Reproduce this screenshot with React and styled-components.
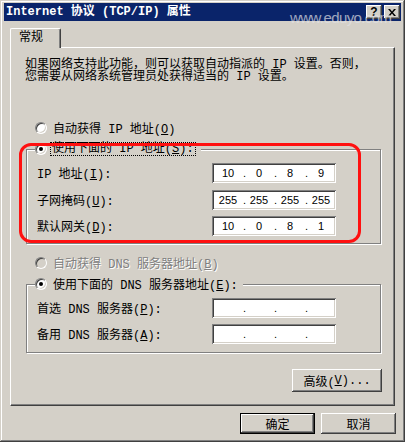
import React from "react";
import styled, { createGlobalStyle } from "styled-components";

const FACE = "#d4d0c8";

const GlobalStyle = createGlobalStyle`
  html, body {
    margin: 0;
    padding: 0;
    background: ${FACE};
  }
  body {
    font-family: "Liberation Mono", "Noto Sans CJK SC", monospace;
    font-size: 12px;
    color: #000;
  }
  * { box-sizing: border-box; }
`;

const Window = styled.div`
  position: relative;
  width: 405px;
  height: 442px;
  padding: 3px 4px 0 4px;
  background: ${FACE};
  box-shadow: inset -1px -1px #404040, inset 1px 1px ${FACE},
    inset -2px -2px #808080, inset 2px 2px #fff;
  display: flex;
  flex-direction: column;
  overflow: hidden;
`;

const TitleBar = styled.div`
  height: 18px;
  background: #0a246a;
  display: flex;
  align-items: center;
  padding: 0 1px 0 2px;
`;

const TitleText = styled.span`
  flex: 1;
  color: #fff;
  font-weight: bold;
  line-height: 18px;
  white-space: nowrap;
`;

const CaptionButtons = styled.div`
  display: flex;
  gap: 2px;
`;

const CaptionButton = styled.div`
  width: 16px;
  height: 14px;
  background: ${FACE};
  box-shadow: inset -1px -1px #404040, inset 1px 1px #fff,
    inset -2px -2px #808080;
  display: flex;
  align-items: center;
  justify-content: center;
  font-family: "Liberation Sans", sans-serif;
  font-weight: bold;
  font-size: 12px;
  line-height: 1;
`;

const Watermark = styled.div`
  position: absolute;
  left: 290px;
  top: 9px;
  font-family: "Liberation Sans", sans-serif;
  font-size: 15px;
  letter-spacing: -0.6px;
  color: rgba(225, 225, 230, 0.7);
  pointer-events: none;
`;

const Body = styled.div`
  padding: 7px 6px 0 6px;
  display: flex;
  flex-direction: column;
`;

const TabStrip = styled.div`
  display: flex;
  height: 19px;
`;

const Tab = styled.div`
  position: relative;
  z-index: 1;
  width: 51px;
  height: 20px;
  padding: 3px 0 0 8px;
  background: ${FACE};
  border-top: 1px solid #fff;
  border-left: 1px solid #fff;
  border-right: 1px solid #404040;
  border-radius: 2px 2px 0 0;
  box-shadow: inset -1px 0 #808080;
  line-height: 12px;
`;

const Pane = styled.div`
  height: 359px;
  border: 1px solid;
  border-color: #fff #404040 #404040 #fff;
  box-shadow: inset -1px -1px #808080;
  padding: 11px 13px 0 14px;
  display: flex;
  flex-direction: column;
`;

const Intro = styled.p`
  margin: 0;
  line-height: 12px;
  white-space: nowrap;
`;

const RadioRow = styled.div`
  display: flex;
  align-items: center;
  gap: ${(p) => (p.$focus ? "3px" : "6px")};
  height: 14px;
  margin-top: ${(p) => p.$top || 0}px;
  padding-left: ${(p) => p.$indent || 0}px;
  color: ${(p) => (p.$disabled ? "#808080" : "#000")};
  text-shadow: ${(p) => (p.$disabled ? "1px 1px #fff" : "none")};
  white-space: nowrap;
`;

const Radio = styled.span`
  flex: none;
  width: 12px;
  height: 12px;
  border-radius: 50%;
  background: ${(p) => (p.$disabled ? FACE : "#fff")};
  border: 1px solid;
  border-color: #808080 #fff #fff #808080;
  box-shadow: inset 1px 1px #404040, inset -1px -1px ${FACE};
  display: flex;
  align-items: center;
  justify-content: center;
  &::after {
    content: "";
    width: 4px;
    height: 4px;
    border-radius: 50%;
    background: ${(p) => (p.$checked ? "#000" : "transparent")};
  }
`;

const FocusLabel = styled.span`
  border: 1px dotted #000;
  padding: 0 1px;
  line-height: 12px;
`;

const GroupBox = styled.div`
  margin: ${(p) => p.$top}px 0 0 1px;
  border: 1px solid #808080;
  box-shadow: inset 1px 1px #fff, 1px 1px #fff;
  padding: 0 0 ${(p) => p.$bottom}px 8px;
  display: flex;
  flex-direction: column;
`;

const GroupHeader = styled.div`
  margin-top: -8px;
  align-self: flex-start;
  background: ${FACE};
  padding-right: 5px;
`;

const FieldRows = styled.div`
  margin-top: 7px;
  display: flex;
  flex-direction: column;
  gap: ${(p) => p.$gap}px;
`;

const FieldRow = styled.div`
  display: grid;
  grid-template-columns: 175px 124px;
  align-items: center;
  padding-left: 2px;
  height: 20px;
  white-space: nowrap;
`;

const IpBox = styled.div`
  height: 20px;
  background: #fff;
  box-shadow: inset 1px 1px #808080, inset -1px -1px #fff,
    inset 2px 2px #404040, inset -2px -2px ${FACE};
  padding: 0 2px 0 4px;
  display: grid;
  grid-template-columns: 24px 7px 24px 7px 24px 7px 24px;
  align-items: center;
  font-family: "Liberation Sans", sans-serif;
  font-size: 11px;
`;

const Octet = styled.span`
  text-align: center;
`;

const Dot = styled.span`
  text-align: right;
  padding-right: 1px;
`;

const Button = styled.div`
  width: ${(p) => p.$w}px;
  height: ${(p) => p.$h}px;
  background: ${FACE};
  display: flex;
  align-items: center;
  justify-content: center;
  white-space: nowrap;
  border: ${(p) => (p.$default ? "1px solid #000" : "none")};
  box-shadow: inset -1px -1px #404040, inset 1px 1px #fff,
    inset -2px -2px #808080;
`;

const AdvancedRow = styled.div`
  margin-top: 16px;
  margin-right: -1px;
  display: flex;
  justify-content: flex-end;
`;

const DialogButtons = styled.div`
  margin-top: 7px;
  margin-right: -1px;
  display: flex;
  justify-content: flex-end;
  gap: 6px;
`;

const Annotation = styled.div`
  position: absolute;
  left: 19px;
  top: 143px;
  width: 342px;
  height: 100px;
  border: 3px solid #ff1010;
  border-radius: 12px;
  pointer-events: none;
`;

function IpField({ parts }) {
  return (
    <IpBox>
      {parts.map((p, i) => (
        <React.Fragment key={i}>
          {i > 0 && <Dot>.</Dot>}
          <Octet>{p}</Octet>
        </React.Fragment>
      ))}
    </IpBox>
  );
}

const ipRows = [
  { label: "IP 地址", key: "I", parts: ["10", "0", "8", "9"] },
  { label: "子网掩码", key: "U", parts: ["255", "255", "255", "255"] },
  { label: "默认网关", key: "D", parts: ["10", "0", "8", "1"] },
];

const dnsRows = [
  { label: "首选 DNS 服务器", key: "P", parts: ["", "", "", ""] },
  { label: "备用 DNS 服务器", key: "A", parts: ["", "", "", ""] },
];

export default function App() {
  return (
    <>
      <GlobalStyle />
      <Window>
        <TitleBar>
          <TitleText>Internet 协议 (TCP/IP) 属性</TitleText>
          <CaptionButtons>
            <CaptionButton>?</CaptionButton>
            <CaptionButton>
              <svg width="8" height="7" viewBox="0 0 8 7">
                <path d="M0 0h2l2 2.5L6 0h2L5 3.5 8 7H6L4 4.5 2 7H0l3-3.5z" fill="#000" />
              </svg>
            </CaptionButton>
          </CaptionButtons>
        </TitleBar>
        <Watermark>www.eduyo.com</Watermark>

        <Body>
          <TabStrip>
            <Tab>常规</Tab>
          </TabStrip>
          <Pane>
            <Intro>
              如果网络支持此功能，则可以获取自动指派的 IP 设置。否则，
              <br />
              您需要从网络系统管理员处获得适当的 IP 设置。
            </Intro>

            <RadioRow $top={38} $indent={10}>
              <Radio />
              <span>
                自动获得 IP 地址(<u>O</u>)
              </span>
            </RadioRow>

            <GroupBox $top={14} $bottom={7}>
              <GroupHeader>
                <RadioRow $focus>
                  <Radio $checked />
                  <FocusLabel>
                    使用下面的 IP 地址(<u>S</u>):
                  </FocusLabel>
                </RadioRow>
              </GroupHeader>
              <FieldRows $gap={6.5}>
                {ipRows.map((r) => (
                  <FieldRow key={r.key}>
                    <span>
                      {r.label}(<u>{r.key}</u>):
                    </span>
                    <IpField parts={r.parts} />
                  </FieldRow>
                ))}
              </FieldRows>
            </GroupBox>

            <RadioRow $top={12} $indent={10} $disabled>
              <Radio $disabled />
              <span>
                自动获得 DNS 服务器地址(<u>B</u>)
              </span>
            </RadioRow>

            <GroupBox $top={14} $bottom={8}>
              <GroupHeader>
                <RadioRow>
                  <Radio $checked />
                  <span>
                    使用下面的 DNS 服务器地址(<u>E</u>):
                  </span>
                </RadioRow>
              </GroupHeader>
              <FieldRows $gap={6}>
                {dnsRows.map((r) => (
                  <FieldRow key={r.key}>
                    <span>
                      {r.label}(<u>{r.key}</u>):
                    </span>
                    <IpField parts={r.parts} />
                  </FieldRow>
                ))}
              </FieldRows>
            </GroupBox>

            <AdvancedRow>
              <Button $w={90} $h={23}>
                高级(<u>V</u>)...
              </Button>
            </AdvancedRow>
          </Pane>

          <DialogButtons>
            <Button $w={75} $h={21} $default>
              确定
            </Button>
            <Button $w={75} $h={21}>
              取消
            </Button>
          </DialogButtons>
        </Body>

        <Annotation />
      </Window>
    </>
  );
}
